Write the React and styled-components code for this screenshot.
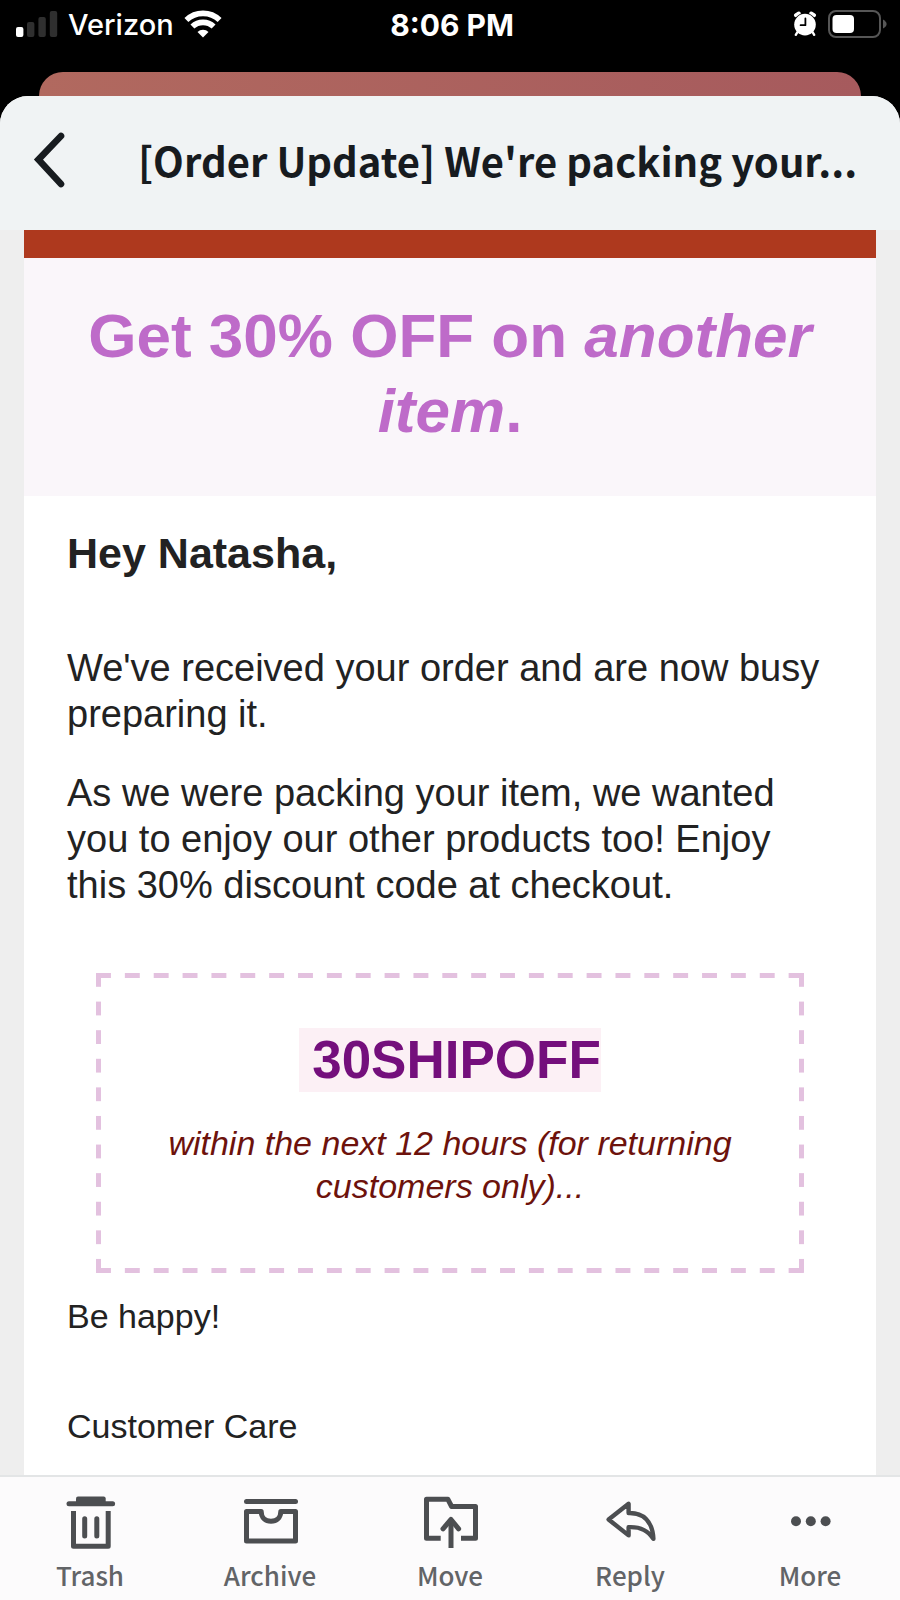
import React from "react";
import styled, { createGlobalStyle } from "styled-components";

const GlobalStyle = createGlobalStyle`
  *, *::before, *::after { box-sizing: border-box; }
  body { margin: 0; background: #000; }
  h1, h2, h3, p { margin: 0; font-weight: inherit; }
  button { font: inherit; color: inherit; background: none; border: 0; padding: 0; cursor: pointer; }
  svg { display: block; flex: none; }
`;

const bodyFont = `"Liberation Sans", Arial, sans-serif`;
const appFont = `"Noto Sans CJK JP", "Noto Sans", sans-serif`;

const Screen = styled.div`
  min-height: 100vh;
  display: flex;
  flex-direction: column;
  background: #000;
`;

const StatusBar = styled.header`
  display: grid;
  grid-template-columns: 1fr auto 1fr;
  align-items: center;
  height: 48px;
  margin-bottom: 24px;
  padding: 0 12px 0 16px;
  color: #fff;
  font: 500 29px/32px Inter, sans-serif;
`;

const StatusGroup = styled.div`
  display: flex;
  align-items: center;
  gap: ${(p) => p.$gap}px;
  justify-content: ${(p) => (p.$end ? "flex-end" : "flex-start")};
`;

const Clock = styled.time`
  font-weight: 700;
  font-size: 30px;
  padding-top: 2px;
`;

const Carrier = styled.span`
  padding-top: 2px;
`;

const BackCard = styled.div`
  height: 24px;
  margin: 0 39px;
  border-radius: 24px 24px 0 0;
  background: linear-gradient(90deg, #b1695f, #a65a5d);
`;

const Sheet = styled.main`
  flex: 1;
  display: flex;
  flex-direction: column;
  border-radius: 28px 28px 0 0;
  overflow: hidden;
  background: #eee;
`;

const TitleBar = styled.div`
  display: flex;
  align-items: center;
  height: 134px;
  padding: 0 36px 6px 32px;
  gap: 70px;
  background: #f0f3f4;
  color: #171b1f;
`;

const BackButton = styled.button`
  flex: none;
`;

const Subject = styled.h1`
  min-width: 0;
  white-space: nowrap;
  font: 700 40px/60px ${appFont};
`;

const Mail = styled.article`
  flex: 1;
  margin: 0 24px;
  background: #fff;
  color: #222;
  font-family: ${bodyFont};
`;

const Promo = styled.h2`
  border-top: 28px solid #ae391e;
  padding: 40px 40px 48px;
  background: #faf6fa;
  color: #be6bc9;
  text-align: center;
  font-weight: 700;
  font-size: 62px;
  line-height: 75px;
`;

const Content = styled.div`
  padding: 32px 43px 24px;
`;

const Greeting = styled.h3`
  margin-bottom: 67px;
  font-weight: 700;
  font-size: 43px;
  line-height: 50px;
`;

const Paragraph = styled.p`
  font-size: 38px;
  line-height: 46px;
  & + & { margin-top: 33px; }
`;

const SignOff = styled.p`
  font-size: 34px;
  line-height: 40px;
  & + & { margin-top: 70px; }
`;

const Coupon = styled.section`
  --dash: #e3c1df;
  --across: linear-gradient(90deg, var(--dash) 15px, transparent 0);
  --down: linear-gradient(var(--dash) 14px, transparent 0);
  --x: calc((100% - 15px) / 24) 5px;
  --y: 5px calc((100% - 14px) / 10);
  margin: 65px 29px 23px;
  padding: 55px 60px 65px;
  text-align: center;
  background-image: var(--across), var(--across), var(--down), var(--down);
  background-size: var(--x), var(--x), var(--y), var(--y);
  background-position: 0 0, 0 100%, 0 0, 100% 0;
  background-repeat: repeat-x, repeat-x, repeat-y, repeat-y;
`;

const Code = styled.strong`
  display: inline-block;
  padding-left: 13px;
  background: #fcf0f5;
  color: #740f7c;
  font-size: 53px;
  line-height: 64px;
  vertical-align: top;
`;

const Terms = styled.p`
  margin-top: 30px;
  color: #6d120c;
  font-style: italic;
  font-size: 34px;
  line-height: 43px;
`;

const Toolbar = styled.nav`
  display: grid;
  grid-template-columns: repeat(5, 1fr);
  padding: 13px 0 7px;
  border-top: 2px solid #e3e5e6;
  background: #fcfbfc;
`;

const Action = styled.button`
  display: flex;
  flex-direction: column;
  align-items: center;
  gap: 7px;
  color: #4c4e51;
`;

const ActionLabel = styled.span`
  color: #626467;
  font: 500 26px/36px ${appFont};
`;

const Signal = () => (
  <svg width="42" height="26" viewBox="0 0 42 26" aria-label="Signal, one bar" role="img">
    <rect x="0" y="16" width="7.4" height="10" rx="2" fill="#fff" />
    <g fill="#2f2f2f">
      <rect x="11" y="11" width="7.4" height="15" rx="2" />
      <rect x="22.4" y="6" width="7.4" height="20" rx="2" />
      <rect x="33.8" y="0" width="7.4" height="26" rx="2" />
    </g>
  </svg>
);

const Wifi = () => (
  <svg width="38" height="28" viewBox="0 0 38 28" fill="none" stroke="#fff" strokeWidth="5.6" aria-label="Wi-Fi" role="img">
    <path d="M2.4 10.1A23.9 23.9 0 0 1 35.6 10.1" />
    <path d="M8.4 16.6A15.3 15.3 0 0 1 29.6 16.6" />
    <path d="M19 27.4L13.5 21.9A7.8 7.8 0 0 1 24.5 21.9Z" fill="#fff" stroke="none" />
  </svg>
);

const Alarm = () => (
  <svg width="24" height="26" viewBox="0 0 24 26" aria-label="Alarm set" role="img">
    <path d="M3 4.2L5.8 2.6M21 4.2L18.2 2.6" stroke="#fff" strokeWidth="4" strokeLinecap="round" />
    <circle cx="12" cy="13.6" r="11.6" fill="#000" />
    <path d="M4.5 21L2.8 23.8M19.5 21L21.2 23.8" stroke="#fff" strokeWidth="2.4" strokeLinecap="round" />
    <circle cx="12" cy="13.6" r="10.8" fill="#fff" />
    <path d="M12.4 7.4V14.2H7.6" fill="none" stroke="#000" strokeWidth="1.8" strokeLinecap="round" strokeLinejoin="round" />
  </svg>
);

const Battery = () => (
  <svg width="60" height="28" viewBox="0 0 60 28" aria-label="Battery, half full" role="img">
    <rect x="1" y="1" width="51" height="26" rx="7" fill="none" stroke="#565656" strokeWidth="2" />
    <rect x="4.5" y="5" width="21.5" height="18" rx="4" fill="#fff" />
    <path d="M55 9.5Q58.6 11.5 58.6 14T55 18.5Z" fill="#565656" />
  </svg>
);

const Chevron = () => (
  <svg width="36" height="56" viewBox="0 0 36 56" fill="none" stroke="currentColor" strokeWidth="6.6" strokeLinecap="round">
    <path d="M29 4L6.4 27.6L29 52" />
  </svg>
);

const Icon = ({ children, width = 5 }) => (
  <svg width="60" height="60" viewBox="0 0 60 60" fill="none" stroke="currentColor" strokeWidth={width} strokeLinejoin="round" aria-hidden="true">
    {children}
  </svg>
);

const actions = [
  {
    label: "Trash",
    icon: (
      <Icon>
        <path d="M9 13.8H52.6" strokeLinecap="round" />
        <path d="M18 6.4H43.6Q45.7 6.4 45.7 8.6V14H16V8.6Q16 6.4 18 6.4Z" fill="currentColor" stroke="none" />
        <path d="M13.5 21V56.2H48.2V21" />
        <path d="M24.7 28.7V46M36.8 28.7V46" strokeLinecap="round" />
      </Icon>
    ),
  },
  {
    label: "Archive",
    icon: (
      <Icon>
        <path d="M6.5 11.5H55.5" strokeLinecap="round" />
        <path d="M6.5 21.5H21.2C21.2 27.5 25.5 31.2 31 31.2S40.8 27.5 40.8 21.5H55.5V51H6.5Z" />
      </Icon>
    ),
  },
  {
    label: "Move",
    icon: (
      <Icon>
        <path d="M20.7 48.2H6.5V9.2H27.8L31.6 16.5H55.5V48.2H41" />
        <path d="M31 58V29" />
        <path d="M23 38.8L31 29.5L38.6 38.8" strokeLinecap="round" />
      </Icon>
    ),
  },
  {
    label: "Reply",
    icon: (
      <Icon width={4.4}>
        <path d="M8.6 29.5L28.6 13.8V23C43 22.5 52.5 31 53.4 48.8C48 40.5 41 36.6 28.6 37.2V45.4Z" />
      </Icon>
    ),
  },
  {
    label: "More",
    icon: (
      <Icon>
        <g fill="currentColor" stroke="none">
          <circle cx="16" cy="31.3" r="5" />
          <circle cx="30.8" cy="31.3" r="5" />
          <circle cx="45.6" cy="31.3" r="5" />
        </g>
      </Icon>
    ),
  },
];

export default function App() {
  return (
    <Screen>
      <GlobalStyle />
      <StatusBar>
        <StatusGroup $gap={10}>
          <Signal />
          <Carrier>Verizon</Carrier>
          <Wifi />
        </StatusGroup>
        <Clock>8:06 PM</Clock>
        <StatusGroup $gap={11} $end>
          <Alarm />
          <Battery />
        </StatusGroup>
      </StatusBar>
      <BackCard />
      <Sheet>
        <TitleBar>
          <BackButton type="button" aria-label="Back">
            <Chevron />
          </BackButton>
          <Subject>[Order Update] We're packing your...</Subject>
        </TitleBar>
        <Mail>
          <Promo>
            Get 30% OFF on <em>another</em> <em>item</em>.
          </Promo>
          <Content>
            <Greeting>Hey Natasha,</Greeting>
            <Paragraph>We've received your order and are now busy preparing it.</Paragraph>
            <Paragraph>
              As we were packing your item, we wanted you to enjoy our other products too! Enjoy this
              30% discount code at checkout.
            </Paragraph>
            <Coupon>
              <Code>30SHIPOFF</Code>
              <Terms>within the next 12 hours (for returning customers only)...</Terms>
            </Coupon>
            <SignOff>Be happy!</SignOff>
            <SignOff>Customer Care</SignOff>
          </Content>
        </Mail>
        <Toolbar aria-label="Message actions">
          {actions.map(({ label, icon }) => (
            <Action key={label} type="button">
              {icon}
              <ActionLabel>{label}</ActionLabel>
            </Action>
          ))}
        </Toolbar>
      </Sheet>
    </Screen>
  );
}
